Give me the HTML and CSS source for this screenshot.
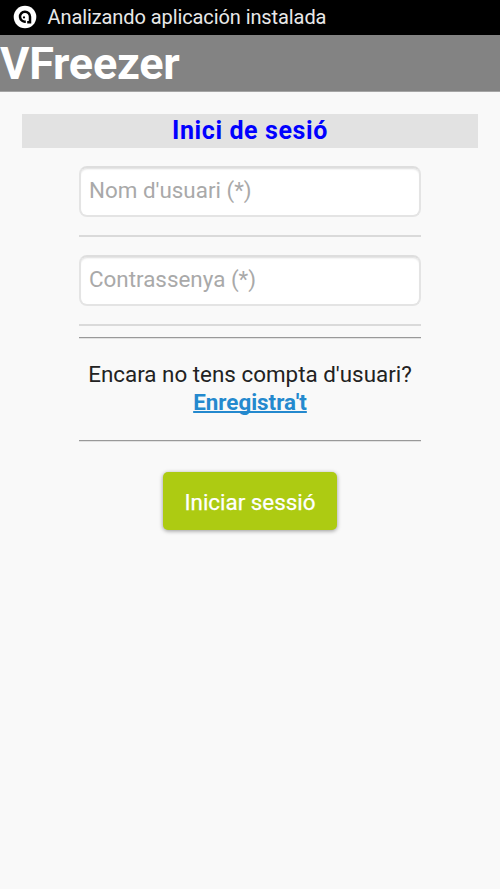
FILE: index.html
```html
<!DOCTYPE html>
<html lang="ca">
<head>
<meta charset="utf-8">
<title>VFreezer</title>
<link rel="stylesheet" href="styles.css">
</head>
<body>
<div class="status">
  <svg class="status-icon" viewBox="0 0 24 24" width="24" height="24" aria-hidden="true">
    <circle cx="12" cy="12" r="11.3" fill="#fff"/>
    <path d="M12.8 16.6A5 5 0 1 1 17 11.8V17.3H14.2" fill="none" stroke="#000" stroke-width="2.5"/>
    <circle cx="11" cy="12.4" r="1.1" fill="#000"/>
  </svg>
  <span class="status-text">Analizando aplicación instalada</span>
</div>
<header class="appbar"><h1>VFreezer</h1></header>
<main class="content">
  <h2 class="title"><span>Inici de sesió</span></h2>
  <form class="form">
    <div class="field"><input type="text" placeholder="Nom d'usuari (*)"></div>
    <div class="field"><input type="password" placeholder="Contrassenya (*)"></div>
    <hr class="rule">
    <p class="signup"><span>Encara no tens compta d'usuari?</span><br><a href="#">Enregistra't</a></p>
    <hr class="rule">
    <button type="button" class="submit">Iniciar sessió</button>
  </form>
</main>
</body>
</html>
```
FILE: styles.css
```css
* { box-sizing: border-box; }
body { margin: 0; min-height: 889px; background: #f9f9f9; font-family: Roboto, sans-serif; color: #222; }
.status { display: flex; align-items: center; height: 35px; padding-left: 13px; background: #000; color: #e8e8e8; }
.status-icon { margin: -2px 10.5px 0 0; }
.status-text { font-size: 20px; line-height: 35px; letter-spacing: -.09px; }
.appbar { height: 57px; background: #838383; border-bottom: 1px solid #a5a5a5; }
.appbar h1 { margin: 0; font-size: 45px; line-height: 57px; font-weight: 700; letter-spacing: -.25px; color: #fff; }
.content { padding: 22px 22px 0; }
.title { margin: 0; height: 34px; background: #e2e2e2; color: #00f; font-size: 25px; line-height: 34px; font-weight: 700; letter-spacing: .6px; text-align: center; }
.form { width: 342px; margin: 18px auto 0; }
.field { height: 71px; border-bottom: 2px solid #dadada; margin-bottom: 18px; }
.field input { display: block; width: 342px; height: 51px; padding: 0 8px 4px; border: 2px solid #e4e4e4; border-top-color: #dedede; border-radius: 8px; background: #fff; box-shadow: inset 0 2px 2px -1px #ddd; font: 22.4px Roboto, sans-serif; outline: 0; }
.field input::placeholder { color: #a9a9a9; opacity: 1; }
.rule { margin: 0; height: 2px; border: 0; border-top: 1px solid #999; border-bottom: 1px solid #e2e2e2; }
.field + .rule { margin-top: -7px; }
.signup { margin: 21px 0 24px; font-size: 22.4px; line-height: 28px; text-align: center; white-space: nowrap; }
.signup a { color: #2489ce; font-weight: 700; text-decoration-thickness: 1.5px; text-decoration-skip-ink: none; }
.submit { display: block; width: 174px; height: 58px; margin: 30px auto 0; padding: 2px 0 0; border: 0; border-radius: 5px; background: #adcb12; box-shadow: 0 1px 4px rgba(0,0,0,.4); color: #fff; font: 22.4px Roboto, sans-serif; -webkit-text-stroke: .25px #fff; }
```
